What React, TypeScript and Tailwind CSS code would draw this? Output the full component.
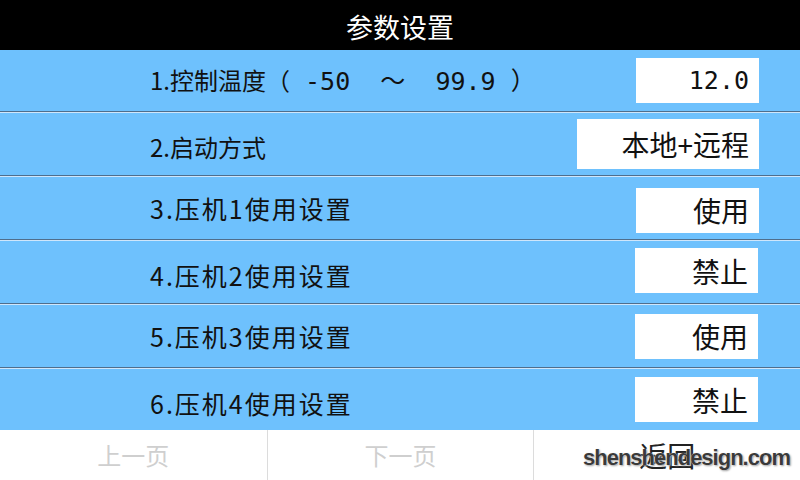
type ParamRow = {
  id: number;
  label: string;
  value: string;
  labelClass: string;
  boxClass: string;
};

const ROWS: ParamRow[] = [
  { id: 1, label: '', value: '12.0', labelClass: 'text-[24px]', boxClass: 'w-[123px] h-[45px] text-[25px] font-["DejaVu_Sans_Mono",monospace]' },
  { id: 2, label: '2.启动方式', value: '本地+远程', labelClass: 'text-[24px] pt-[6px]', boxClass: 'w-[182px] h-[50px] text-[28px]' },
  { id: 3, label: '3.压机1使用设置', value: '使用', labelClass: 'text-[25px] tracking-[2px] pl-[0px]', boxClass: 'w-[123px] h-[45px] text-[28px] mt-[4px]' },
  { id: 4, label: '4.压机2使用设置', value: '禁止', labelClass: 'text-[25px] tracking-[2px] pt-[6px]', boxClass: 'w-[123px] h-[45px] text-[28px] mr-[1px] -mt-[3px]' },
  { id: 5, label: '5.压机3使用设置', value: '使用', labelClass: 'text-[25px] tracking-[2px]', boxClass: 'w-[123px] h-[45px] text-[28px] mr-[1px]' },
  { id: 6, label: '6.压机4使用设置', value: '禁止', labelClass: 'text-[25px] tracking-[2px] pt-[8px]', boxClass: 'w-[123px] h-[45px] text-[28px] mr-[1px]' },
];

const CJK = 'font-["Noto_Sans_CJK_SC","Noto_Sans",sans-serif]';

function TempLabel() {
  // control temperature with its allowed range, range part is fixed-width
  return (
    <span className="text-[24px] whitespace-pre pt-[5px]">
      1.控制温度（
      <span className='font-["DejaVu_Sans_Mono","Noto_Sans_CJK_SC",monospace] text-[25px]'>
        {' -50  ～  99.9 ）'}
      </span>
    </span>
  );
}

export default function App() {
  return (
    <div className={`w-[800px] h-[480px] overflow-hidden bg-[#6ec1fd] flex flex-col ${CJK}`}>
      <div className="h-[50px] bg-black text-white text-[27px] flex items-center justify-center pt-[4px]">
        参数设置
      </div>

      {ROWS.map((row, i) => (
        <div key={row.id} className="flex flex-col">
          <div
            className={`flex items-center pl-[150px] pr-[41px] text-[#111] ${
              i === 0 || i === ROWS.length - 1 ? 'h-[61px]' : 'h-[62px]'
            }`}
          >
            <div className={`flex-1 leading-none ${row.labelClass}`}>
              {row.id === 1 ? <TempLabel /> : row.label}
            </div>
            <div
              className={`bg-white flex items-center justify-end pr-[10px] leading-none text-[#111] ${row.boxClass}`}
            >
              {row.value}
            </div>
          </div>
          {i < ROWS.length - 1 && (
            <>
              <div className="h-px bg-[#4f6e8c]" />
              <div className="h-px bg-[#cfe6fb]" />
            </>
          )}
        </div>
      ))}

      <div className="relative flex-1 bg-white grid grid-cols-3">
        <div className="flex items-center justify-center text-[24px] text-[#cfcfcf]">上一页</div>
        <div className="flex items-center justify-center text-[24px] text-[#cfcfcf] border-l border-[#dcdcdc]">
          下一页
        </div>
        <div className="flex items-center justify-center text-[28px] text-[#222] border-l border-[#dcdcdc]">
          返回
        </div>
        <span className='absolute left-[583px] top-[17px] leading-none text-[22px] font-bold tracking-[-1px] text-[#3a3a3a] font-["Liberation_Sans",sans-serif] [text-shadow:0_0_1px_#fff,1px_1px_2px_#9a9a9a]'>
          shenshendesign.com
        </span>
      </div>
    </div>
  );
}
